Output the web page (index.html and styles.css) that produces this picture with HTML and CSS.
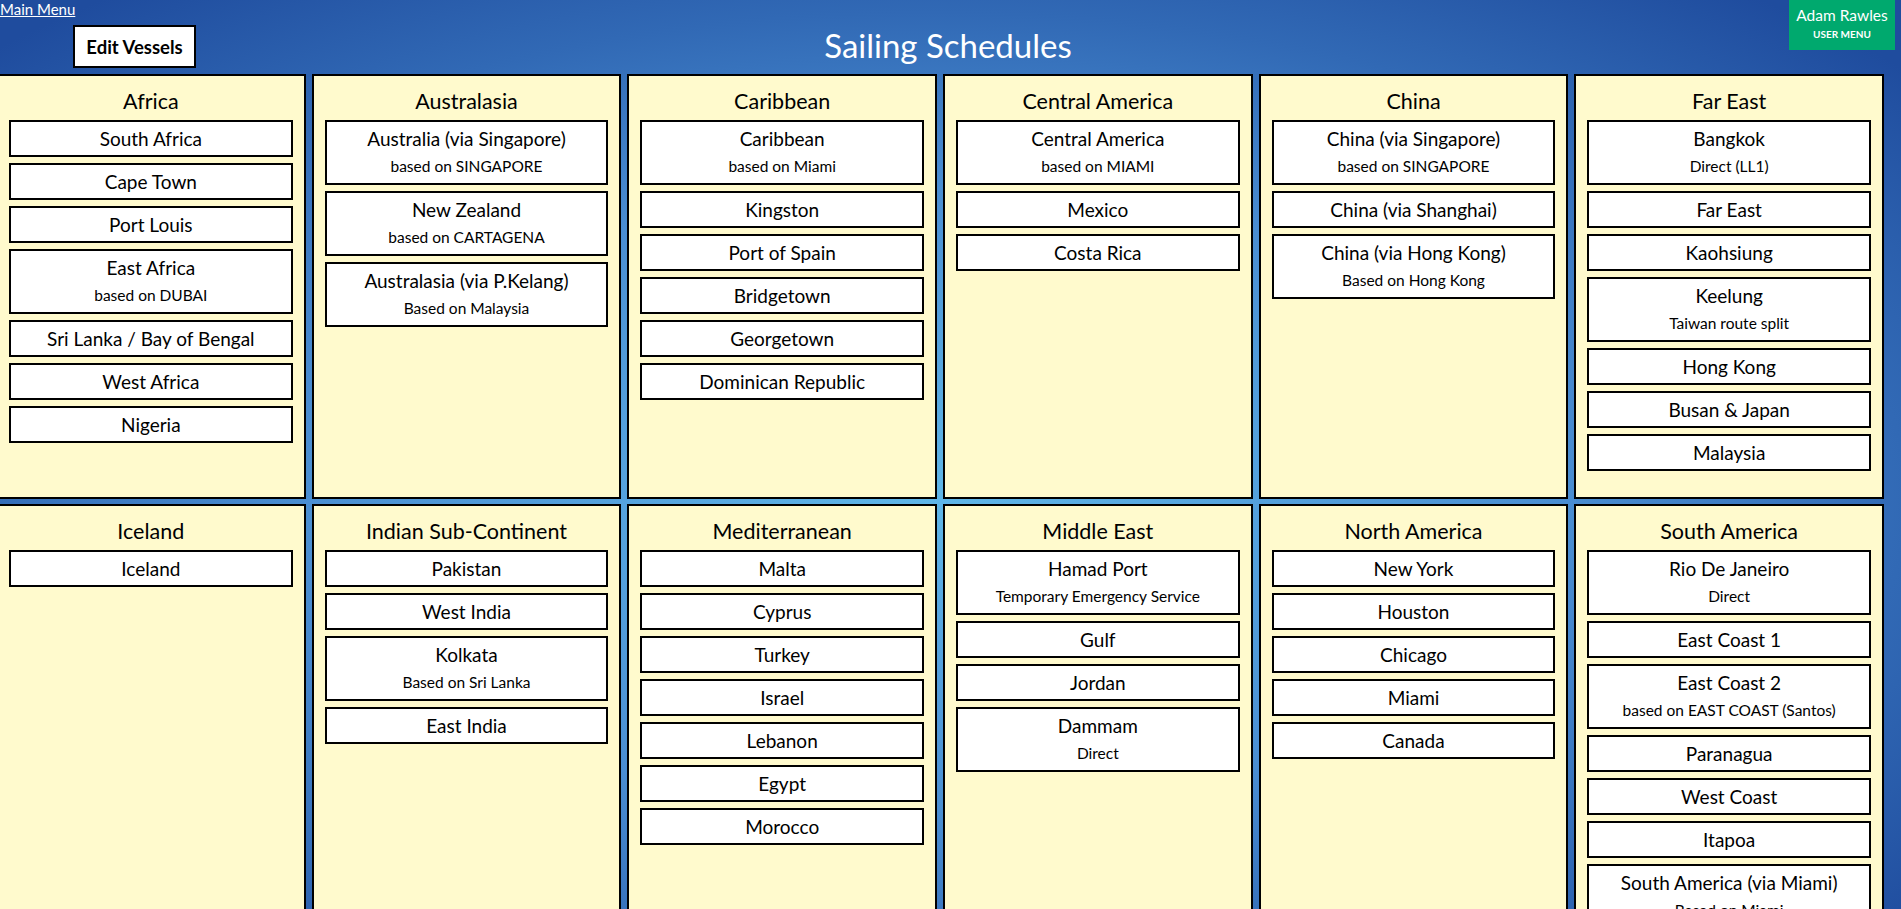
FILE: index.html
```html
<!DOCTYPE html>
<html lang="en">
<head>
    <meta charset="UTF-8">
    <meta name="viewport" content="width=device-width, initial-scale=1.0">
    <title>Sailing Schedules</title>
    <link rel="stylesheet" href="styles.css">
</head>
<body>
<div class="page">
    <header class="top-bar">
        <div class="top-left">
            <a href="#" class="main-menu">Main Menu</a>
            <button class="edit-btn">Edit Vessels</button>
        </div>
        <h1 class="page-title">Sailing Schedules</h1>
        <div class="user-box">
            <div class="user-name">Adam Rawles</div>
            <div class="user-menu">USER MENU</div>
        </div>
    </header>

    <main class="regions">
        <section class="region">
            <h2>Africa</h2>
            <div class="route">South Africa</div>
            <div class="route">Cape Town</div>
            <div class="route">Port Louis</div>
            <div class="route">East Africa<span class="note">based on DUBAI</span></div>
            <div class="route">Sri Lanka / Bay of Bengal</div>
            <div class="route">West Africa</div>
            <div class="route">Nigeria</div>
        </section>
        <section class="region">
            <h2>Australasia</h2>
            <div class="route">Australia (via Singapore)<span class="note">based on SINGAPORE</span></div>
            <div class="route">New Zealand<span class="note">based on CARTAGENA</span></div>
            <div class="route">Australasia (via P.Kelang)<span class="note">Based on Malaysia</span></div>
        </section>
        <section class="region">
            <h2>Caribbean</h2>
            <div class="route">Caribbean<span class="note">based on Miami</span></div>
            <div class="route">Kingston</div>
            <div class="route">Port of Spain</div>
            <div class="route">Bridgetown</div>
            <div class="route">Georgetown</div>
            <div class="route">Dominican Republic</div>
        </section>
        <section class="region">
            <h2>Central America</h2>
            <div class="route">Central America<span class="note">based on MIAMI</span></div>
            <div class="route">Mexico</div>
            <div class="route">Costa Rica</div>
        </section>
        <section class="region">
            <h2>China</h2>
            <div class="route">China (via Singapore)<span class="note">based on SINGAPORE</span></div>
            <div class="route">China (via Shanghai)</div>
            <div class="route">China (via Hong Kong)<span class="note">Based on Hong Kong</span></div>
        </section>
        <section class="region">
            <h2>Far East</h2>
            <div class="route">Bangkok<span class="note">Direct (LL1)</span></div>
            <div class="route">Far East</div>
            <div class="route">Kaohsiung</div>
            <div class="route">Keelung<span class="note">Taiwan route split</span></div>
            <div class="route">Hong Kong</div>
            <div class="route">Busan &amp; Japan</div>
            <div class="route">Malaysia</div>
        </section>

        <section class="region">
            <h2>Iceland</h2>
            <div class="route">Iceland</div>
        </section>
        <section class="region">
            <h2>Indian Sub-Continent</h2>
            <div class="route">Pakistan</div>
            <div class="route">West India</div>
            <div class="route">Kolkata<span class="note">Based on Sri Lanka</span></div>
            <div class="route">East India</div>
        </section>
        <section class="region">
            <h2>Mediterranean</h2>
            <div class="route">Malta</div>
            <div class="route">Cyprus</div>
            <div class="route">Turkey</div>
            <div class="route">Israel</div>
            <div class="route">Lebanon</div>
            <div class="route">Egypt</div>
            <div class="route">Morocco</div>
        </section>
        <section class="region">
            <h2>Middle East</h2>
            <div class="route">Hamad Port<span class="note">Temporary Emergency Service</span></div>
            <div class="route">Gulf</div>
            <div class="route">Jordan</div>
            <div class="route">Dammam<span class="note">Direct</span></div>
        </section>
        <section class="region">
            <h2>North America</h2>
            <div class="route">New York</div>
            <div class="route">Houston</div>
            <div class="route">Chicago</div>
            <div class="route">Miami</div>
            <div class="route">Canada</div>
        </section>
        <section class="region">
            <h2>South America</h2>
            <div class="route">Rio De Janeiro<span class="note">Direct</span></div>
            <div class="route">East Coast 1</div>
            <div class="route">East Coast 2<span class="note">based on EAST COAST (Santos)</span></div>
            <div class="route">Paranagua</div>
            <div class="route">West Coast</div>
            <div class="route">Itapoa</div>
            <div class="route">South America (via Miami)<span class="note">Based on Miami</span></div>
        </section>
    </main>
</div>
</body>
</html>
```

FILE: styles.css
```css
html {
    background: #1f4c9e radial-gradient(ellipse 1300px 650px at 49% 55%, #5fb6e8 0%, #4a8ed2 48%, #3169b5 75%, #1f4c9e 100%) fixed;
}
::-webkit-scrollbar {
    width: 5px;
}
::-webkit-scrollbar-track {
    background: #666;
}
::-webkit-scrollbar-thumb {
    background: #666;
}
body {
    font-family: Lato, "Open Sans", sans-serif;
    margin: 0;
    padding: 0;
    color: #000;
}
.page {
    width: 1896px;
}
.top-bar {
    display: grid;
    grid-template-columns: 1fr auto 1fr;
    height: 74px;
}
.top-left {
    display: flex;
    flex-direction: column;
    align-items: flex-start;
}
.main-menu {
    color: white;
    font-size: 15px;
    line-height: 18px;
    text-decoration: underline;
}
.edit-btn {
    margin: 7px 0 0 73px;
    width: 123px;
    height: 43px;
    background: white;
    border: 2px solid #000;
    font-family: Lato, sans-serif;
    font-size: 18.5px;
    font-weight: bold;
    color: #000;
    padding: 0;
    cursor: pointer;
}
.page-title {
    align-self: end;
    margin: 0 0 9px;
    color: white;
    font-size: 33px;
    font-weight: normal;
    line-height: 40px;
}
.user-box {
    justify-self: end;
    width: 106px;
    height: 50px;
    margin-right: 1px;
    background: #00a96e;
    color: white;
    text-align: center;
}
.user-name {
    font-size: 15.5px;
    line-height: 18px;
    padding-top: 6px;
}
.user-menu {
    font-size: 10px;
    font-weight: bold;
    line-height: 14px;
    margin-top: 3px;
}
.regions {
    display: grid;
    grid-template-columns: repeat(6, 1fr);
    grid-auto-rows: minmax(425px, auto);
    gap: 5px 6px;
    width: 1888px;
    margin-left: -4px;
}
.region {
    background: #fffacd;
    border: 2px solid #000;
    padding: 10px 11px;
}
.region h2 {
    margin: 0 0 4px;
    font-size: 21.5px;
    font-weight: normal;
    line-height: 30px;
    text-align: center;
}
.route {
    background: white;
    border: 2px solid #000;
    margin-bottom: 6px;
    font-size: 19px;
    line-height: 33px;
    text-align: center;
    cursor: pointer;
}
.note {
    display: block;
    font-size: 15.5px;
    line-height: 22px;
    padding-bottom: 6px;
}
```
